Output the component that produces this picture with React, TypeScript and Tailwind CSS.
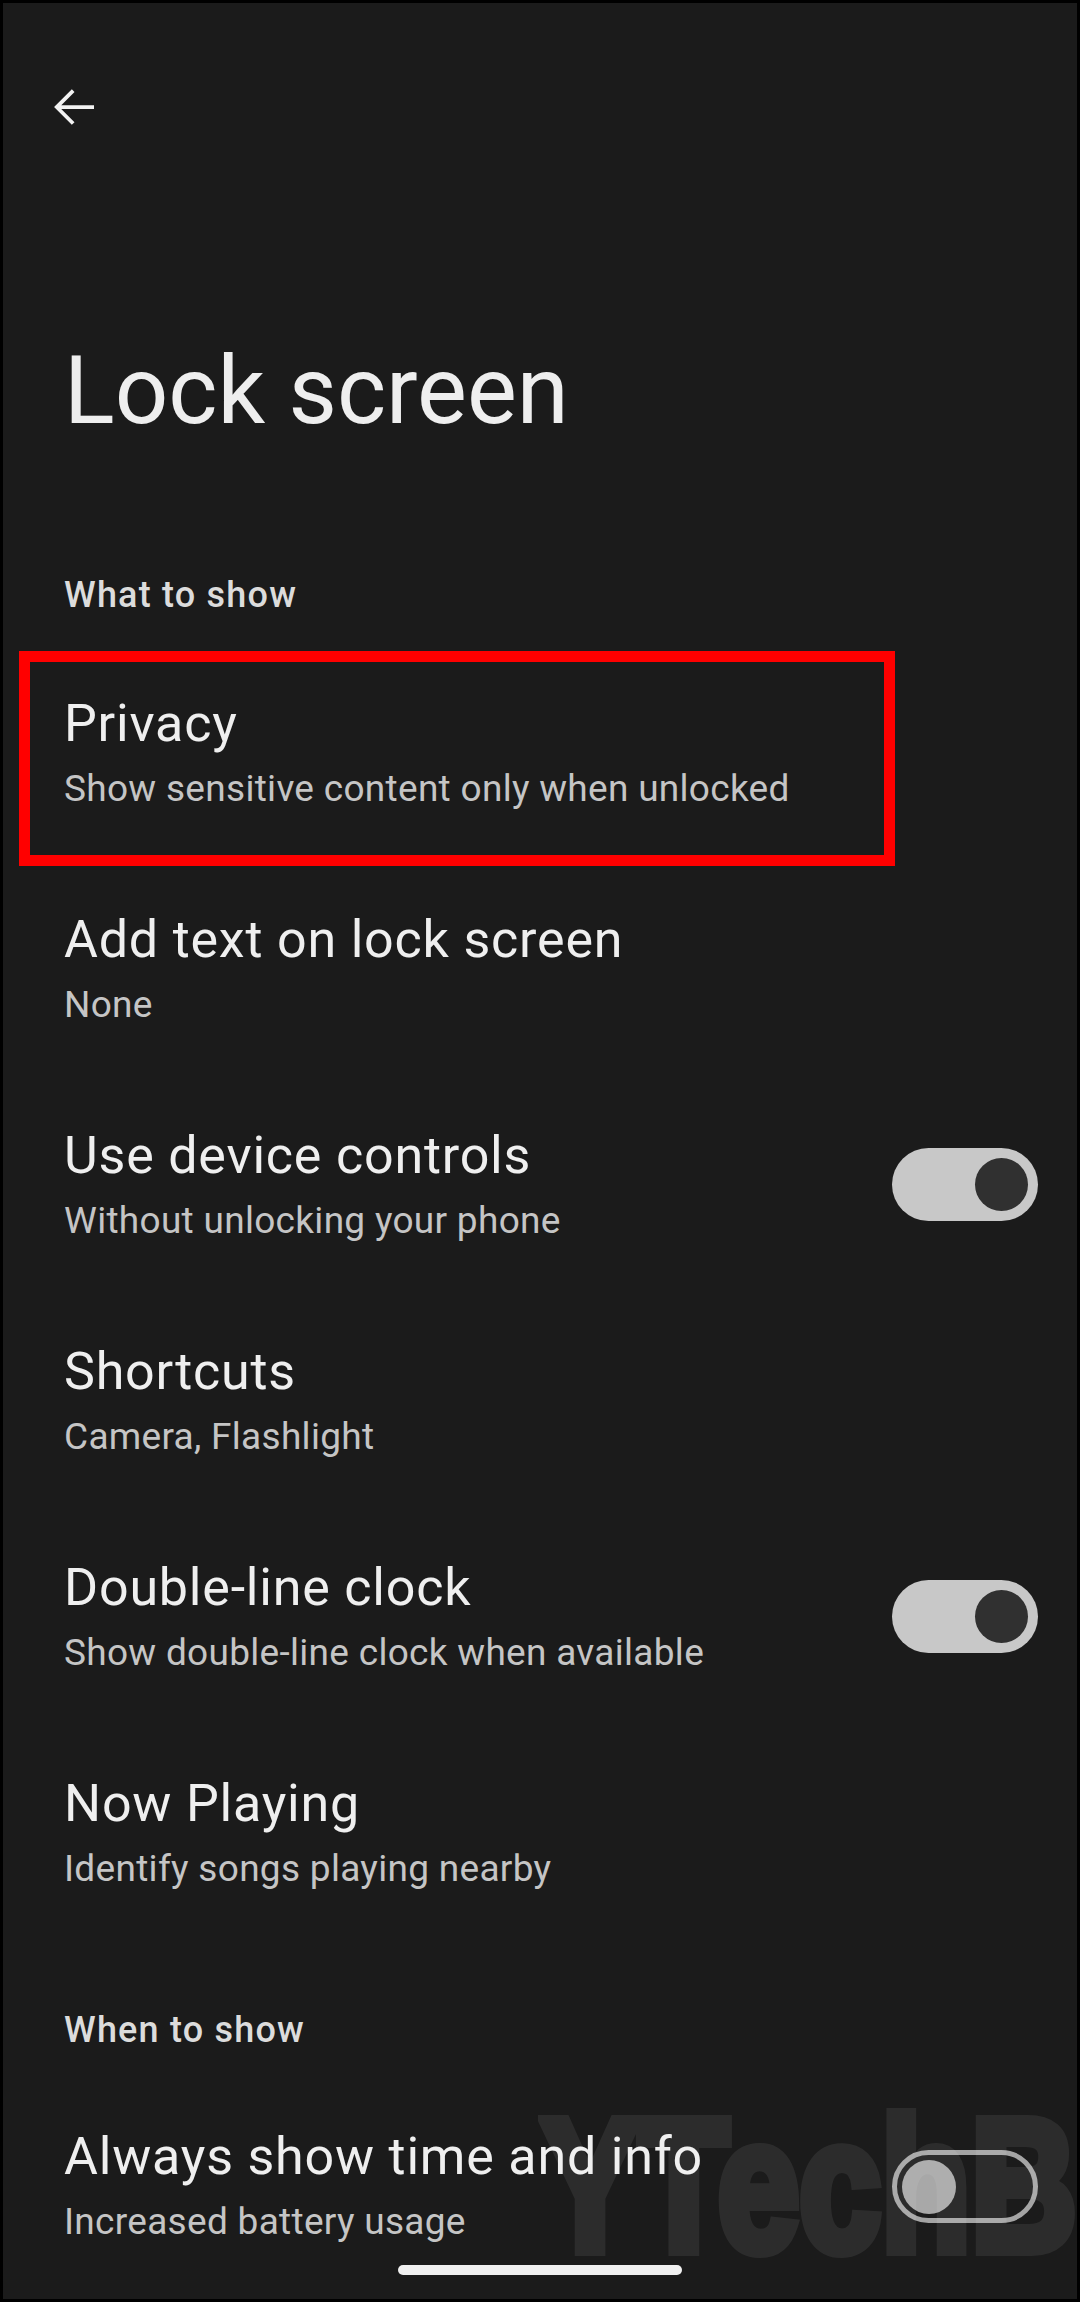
import React from "react";

type Item = {
  title: string;
  summary: string;
  toggle?: "on" | "off";
  highlight?: boolean;
};

const whatToShow: Item[] = [
  {
    title: "Privacy",
    summary: "Show sensitive content only when unlocked",
    highlight: true,
  },
  { title: "Add text on lock screen", summary: "None" },
  {
    title: "Use device controls",
    summary: "Without unlocking your phone",
    toggle: "on",
  },
  { title: "Shortcuts", summary: "Camera, Flashlight" },
  {
    title: "Double-line clock",
    summary: "Show double-line clock when available",
    toggle: "on",
  },
  { title: "Now Playing", summary: "Identify songs playing nearby" },
];

const Switch = ({ checked }: { checked: boolean }) =>
  checked ? (
    <div className="mb-[10px] flex h-[73px] w-[146px] shrink-0 items-center justify-end rounded-full bg-[#c8c8c8] pr-[10px]">
      <div className="h-[53px] w-[53px] rounded-full bg-[#303030]" />
    </div>
  ) : (
    <div className="mb-[7px] flex h-[73px] w-[146px] shrink-0 items-center rounded-full border-[5px] border-[#a4a4a4] pl-[5px]">
      <div className="h-[54px] w-[54px] rounded-full bg-[#a8a8a8]" />
    </div>
  );

const Row = ({ item }: { item: Item }) => (
  <div className="relative flex h-[216px] items-center pl-[61px] pr-[39px]">
    <div className="flex-1">
      <div className="text-[52px] leading-[64px] tracking-[0.8px] text-[#efefef]">
        {item.title}
      </div>
      <div className="text-[37px] leading-[66px] tracking-[0.3px] text-[#c5c5c5]">
        {item.summary}
      </div>
    </div>
    {item.toggle && <Switch checked={item.toggle === "on"} />}
    {item.highlight && (
      <div className="pointer-events-none absolute left-[16px] top-[2px] h-[215px] w-[876px] border-[11px] border-[#ff0000]" />
    )}
  </div>
);

const SectionHeader = ({ label, className }: { label: string; className: string }) => (
  <div
    className={`${className} pl-[61px] text-[36px] font-medium leading-[48px] tracking-[1.2px] text-[#dcdcdc]`}
  >
    {label}
  </div>
);

const App = () => {
  return (
    <div className="relative h-[2302px] w-[1080px] overflow-hidden border-[3px] border-black bg-[#1b1b1b] font-['Roboto',sans-serif]">
      <div className="pl-[41px] pt-[74px]">
        <svg width="60" height="60" viewBox="0 0 24 24" fill="#f2f2f2">
          <path d="M20 11.25H6.9l5.3-5.3-1.06-1.06L4.03 12l7.1 7.1 1.07-1.05-5.3-5.3H20v-1.5z" />
        </svg>
      </div>

      <h1 className="mt-[198px] pl-[61px] text-[94px] leading-[112px] text-[#eeeeee]">
        Lock screen
      </h1>

      <SectionHeader label="What to show" className="mt-[124px]" />
      <div className="mt-[30px]">
        {whatToShow.map((item) => (
          <Row key={item.title} item={item} />
        ))}
      </div>

      <SectionHeader label="When to show" className="mt-[61px]" />
      <div className="mt-[28px]">
        <Row
          item={{
            title: "Always show time and info",
            summary: "Increased battery usage",
            toggle: "off",
          }}
        />
      </div>

      {/* watermark */}
      <div className="pointer-events-none absolute left-[538px] top-[2089px] origin-left scale-x-[0.785] whitespace-nowrap opacity-[0.075]">
        <span className="font-['Liberation_Sans',sans-serif] text-[187px] font-bold leading-[187px] text-white [-webkit-text-stroke:12px_white]">
          YTechB
        </span>
      </div>

      {/* gesture bar */}
      <div className="absolute left-[395px] top-[2262px] h-[10px] w-[284px] rounded-full bg-[#f0f0f0]" />
    </div>
  );
};

export default App;
